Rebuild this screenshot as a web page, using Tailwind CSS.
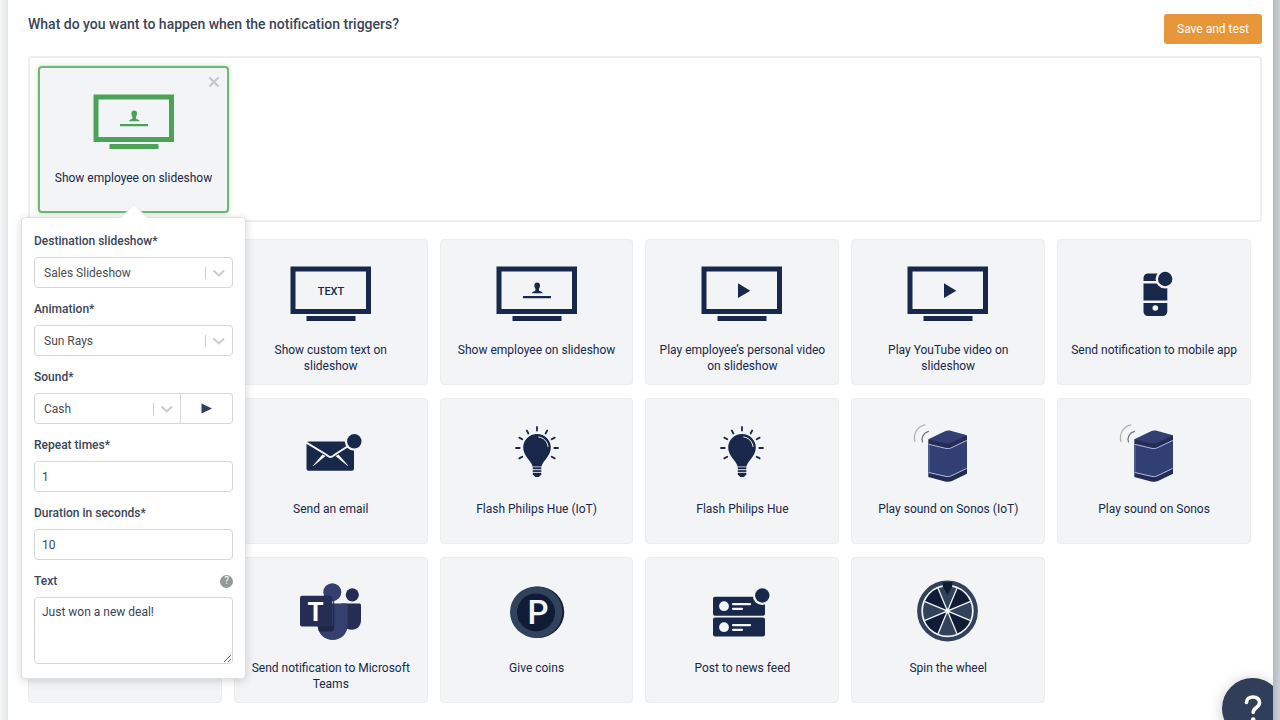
<!DOCTYPE html>
<html lang="en">
<head>
<meta charset="utf-8">
<meta name="viewport" content="width=device-width, initial-scale=1">
<title>Notification actions</title>
<script src="https://cdn.jsdelivr.net/npm/@tailwindcss/browser@4"></script>
</head>
<body class="flex h-screen overflow-hidden bg-white font-['Roboto','Liberation_Sans',sans-serif] text-[12px] leading-4 text-[#17284b]">

<!-- Shared icon shapes -->
<svg class="hidden" aria-hidden="true">
  <symbol id="tv" viewBox="0 0 84 64">
    <rect x="4" y="8" width="75.5" height="42.5" fill="none" stroke="currentColor" stroke-width="5"/>
    <rect x="17.5" y="55" width="49" height="5" fill="currentColor"/>
  </symbol>
  <symbol id="person" viewBox="0 0 84 64">
    <path fill="currentColor" d="M42.2 21.5c1.900 0 2.800 1.300 2.800 3 0 1.500-.3 2.300-1 3v1.900c.3.900 3.500.8 3.600 2.800H37c.1-2 3.100-1.900 3.400-2.800v-1.900c-.7-.7-1-1.500-1-3 0-1.700.9-3 2.800-3zM28 35h28v2.300H28z"/>
  </symbol>
  <symbol id="play" viewBox="0 0 84 64"><path fill="currentColor" d="M38 22.300v14.700l12.300-7.300z"/></symbol>
  <symbol id="bulb" viewBox="0 0 84 64">
    <path fill="currentColor" d="M42 14c7.700 0 13.800 6 13.800 13.600 0 4.400-1.900 7.400-4.300 10.600-2.400 3.200-4.600 5.400-5 8.300h-9c-.4-2.900-2.600-5.100-5-8.300-2.400-3.200-4.300-6.200-4.300-10.600C28.200 20 34.300 14 42 14z"/>
    <path fill="currentColor" d="M37.800 47.200h8.500v7.300l-2.500 2.400h-3.500l-2.500-2.400z"/>
    <path stroke="#f2f4f6" stroke-width=".9" fill="none" d="M37 49.700h10M37 52.400h10"/>
    <path stroke="#f2f4f6" stroke-width="1" fill="none" stroke-linecap="round" d="M43.700 17c5 .5 8.700 4.500 9.300 9.500"/>
    <path stroke="currentColor" stroke-width="1.800" stroke-linecap="round" d="M42 7v3.500M31.800 10.500l1.600 3M52.200 10.500l-1.600 3M24.300 17.600l3 1.700M59.700 17.600l-3 1.700M21 28h3.700M59.300 28H63M24.300 38.400l3-1.700M59.700 38.400l-3-1.700"/>
  </symbol>
  <symbol id="speaker" viewBox="0 0 84 64">
    <path fill="#232c55" d="M22.300 19.300L61 15.300v38.400L46 61c-2.500 1-4 1-7 .400L22.300 57z"/>
    <path fill="#323f73" stroke="#b4bce4" stroke-width="1" d="M22.800 24.300L39 28.200c3 .6 4.500.5 7-.7l14.500-7v28L46 55.500c-2.500 1.200-4 1.300-7 .7L22.800 52.500z"/>
    <path fill="#323f73" stroke="none" d="M22.300 24.800h1v27.400h-1zM60 21.300h1v27h-1z"/>
    <path fill="#323f73" d="M22.300 19.300L38.500 11.500c2.500-1.100 4.500-1.100 7-.5L61 15.300 46 22.500c-2.500 1.200-4.500 1.300-7 .7z"/>
    <path fill="none" stroke="#a9adb5" stroke-width="1.200" stroke-linecap="round" d="M8.900 21.500C7 14 11 6.500 18.800 4.800"/>
    <path fill="none" stroke="#70757f" stroke-width="1.200" stroke-linecap="round" d="M16.500 22c-1.500-4.500.8-9 6-10.600"/>
  </symbol>
</svg>

<div class="w-2 shrink-0 bg-linear-to-r from-[#f5f6f7] to-[#e3e5e8]"></div>

<main class="relative min-w-0 flex-1 overflow-hidden bg-white pr-[11px] pl-5">
  <header class="flex items-start justify-between pt-[14px]">
    <h1 class="text-[14px] leading-5 font-medium text-[#3b4559]">What do you want to happen when the notification triggers?</h1>
    <button class="h-[30px] rounded-[3px] bg-[#e8963a] px-[13px] text-white">Save and test</button>
  </header>

  <section class="mt-3 rounded-[4px] border-2 border-[#eeeeee] p-2 pb-[7px]" aria-label="Selected actions">
    <div class="relative h-[147px] w-[191px] rounded-[4px] border-2 border-[#6fb878] bg-[#f2f4f6] shadow-[0_0_4px_rgba(75,163,90,0.4)]">
      <button class="absolute top-2 right-[7px]" aria-label="Remove action">
        <svg class="size-3" viewBox="0 0 12 12"><path d="M1.500 1.500l9 9M10.500 1.500l-9 9" stroke="#c8c9cb" stroke-width="2.400"/></svg>
      </button>
      <div class="flex flex-col items-center pt-[21px] text-center">
        <svg class="h-16 w-[84px] text-[#4ba35a]" viewBox="0 0 84 64"><use href="#tv"/><use href="#person"/></svg>
        <p class="mt-[17px]">Show employee on slideshow</p>
      </div>

      <!-- Settings popover anchored to the selected action -->
      <form class="absolute top-[149px] left-[-19px] z-10 w-[225px] rounded-[4px] border border-[#dfe1e3] bg-white px-3 pt-[15px] pb-[14px] shadow-[0_2px_10px_rgba(0,0,0,0.16)]">
        <svg class="absolute top-[-14px] left-[98px] h-[15px] w-7" viewBox="0 0 28 15"><path d="M0 15L13 1.200q1-1 2 0L28 15z" fill="#fff"/><path d="M.5 14L13 1.200q1-1 2 0L27.500 14" fill="none" stroke="#e3e5e7" stroke-width=".8"/></svg>
        <div class="flex flex-col gap-[13px] text-[#3b4559]">
          <div class="flex flex-col gap-2">
            <label for="dest" class="font-medium">Destination slideshow*</label>
            <div class="relative">
              <select id="dest" class="block h-[31px] w-full appearance-none rounded-[4px] border border-[#d3d7d9] bg-white px-[9px] text-[#4b4d51]"><option>Sales Slideshow</option></select>
              <svg class="pointer-events-none absolute top-2 right-2 h-4 w-5" viewBox="0 0 20 16"><path d="M.5 2v12" stroke="#cccccc"/><path d="M8.500 5.500l5.300 5 5.300-5" fill="none" stroke="#cccccc" stroke-width="2"/></svg>
            </div>
          </div>
          <div class="flex flex-col gap-2">
            <label for="anim" class="font-medium">Animation*</label>
            <div class="relative">
              <select id="anim" class="block h-[31px] w-full appearance-none rounded-[4px] border border-[#d3d7d9] bg-white px-[9px] text-[#4b4d51]"><option>Sun Rays</option></select>
              <svg class="pointer-events-none absolute top-2 right-2 h-4 w-5" viewBox="0 0 20 16"><path d="M.5 2v12" stroke="#cccccc"/><path d="M8.500 5.500l5.300 5 5.300-5" fill="none" stroke="#cccccc" stroke-width="2"/></svg>
            </div>
          </div>
          <div class="flex flex-col gap-2">
            <label for="sound" class="font-medium">Sound*</label>
            <div class="flex">
              <div class="relative flex-1">
                <select id="sound" class="block h-[31px] w-full appearance-none rounded-l-[4px] border border-[#d3d7d9] bg-white px-[9px] text-[#4b4d51]"><option>Cash</option></select>
                <svg class="pointer-events-none absolute top-2 right-2 h-4 w-5" viewBox="0 0 20 16"><path d="M.5 2v12" stroke="#cccccc"/><path d="M8.500 5.500l5.300 5 5.300-5" fill="none" stroke="#cccccc" stroke-width="2"/></svg>
              </div>
              <button type="button" class="flex h-[31px] w-[52px] items-center justify-center rounded-r-[4px] border border-l-0 border-[#d3d7d9]" aria-label="Play sound">
                <svg class="h-[11px] w-[11px]" viewBox="0 0 11 11"><path d="M.5.500v10l10.500-5z" fill="#2f3e5a"/></svg>
              </button>
            </div>
          </div>
          <div class="flex flex-col gap-2">
            <label for="repeat" class="font-medium">Repeat times*</label>
            <input id="repeat" type="text" value="1" class="h-[31px] w-full rounded-[4px] border border-[#d3d7d9] px-[7px]">
          </div>
          <div class="flex flex-col gap-2">
            <label for="duration" class="font-medium">Duration in seconds*</label>
            <input id="duration" type="text" value="10" class="h-[31px] w-full rounded-[4px] border border-[#d3d7d9] px-[7px]">
          </div>
          <div class="flex flex-col gap-2">
            <div class="flex items-center justify-between">
              <label for="text" class="font-medium">Text</label>
              <span class="flex size-[13px] items-center justify-center rounded-full bg-[#949897] text-[10px] leading-none text-white">?</span>
            </div>
            <textarea id="text" class="block h-[67px] w-full resize-y rounded-[4px] border border-[#d3d7d9] px-[7px] py-[6px]">Just won a new deal!</textarea>
          </div>
        </div>
      </form>
    </div>
  </section>

  <section class="mt-[17px] mr-[11px] grid grid-cols-6 gap-x-3 gap-y-[13px]" aria-label="Available actions">
    <div class="h-[146px] rounded-[4px] border border-[#ebedee] bg-[#f2f4f6]"></div>
    <button class="flex h-[146px] flex-col items-center rounded-[4px] border border-[#ebedee] bg-[#f2f4f6] px-2 pt-[21px]">
      <svg class="h-16 w-[84px] shrink-0" viewBox="0 0 84 64"><use href="#tv"/><text x="42" y="33.500" text-anchor="middle" font-size="11" font-weight="500" fill="currentColor">TEXT</text></svg>
      <span class="mt-[17px] max-w-[150px]">Show custom text on slideshow</span>
    </button>
    <button class="flex h-[146px] flex-col items-center rounded-[4px] border border-[#ebedee] bg-[#f2f4f6] px-2 pt-[21px]">
      <svg class="h-16 w-[84px] shrink-0" viewBox="0 0 84 64"><use href="#tv"/><use href="#person"/></svg>
      <span class="mt-[17px]">Show employee on slideshow</span>
    </button>
    <button class="flex h-[146px] flex-col items-center rounded-[4px] border border-[#ebedee] bg-[#f2f4f6] px-2 pt-[21px]">
      <svg class="h-16 w-[84px] shrink-0" viewBox="0 0 84 64"><use href="#tv"/><use href="#play"/></svg>
      <span class="mt-[17px]">Play employee’s personal video on slideshow</span>
    </button>
    <button class="flex h-[146px] flex-col items-center rounded-[4px] border border-[#ebedee] bg-[#f2f4f6] px-2 pt-[21px]">
      <svg class="h-16 w-[84px] shrink-0" viewBox="0 0 84 64"><use href="#tv"/><use href="#play"/></svg>
      <span class="mt-[17px] max-w-[150px]">Play YouTube video on slideshow</span>
    </button>
    <button class="flex h-[146px] flex-col items-center rounded-[4px] border border-[#ebedee] bg-[#f2f4f6] px-2 pt-[21px]">
      <svg class="h-16 w-[84px] shrink-0" viewBox="0 0 84 64">
        <rect x="31.500" y="12.500" width="23.800" height="42.500" rx="4.500" fill="currentColor"/>
        <path d="M31 21.200h25M31 40.700h25" stroke="#f2f4f6" stroke-width="2.500"/>
        <circle cx="43.300" cy="47" r="2.800" fill="#f2f4f6"/>
        <circle cx="53.200" cy="18" r="9.600" fill="#f2f4f6"/><circle cx="53.200" cy="18" r="7.200" fill="currentColor"/>
      </svg>
      <span class="mt-[17px]">Send notification to mobile app</span>
    </button>

    <div class="h-[146px] rounded-[4px] border border-[#ebedee] bg-[#f2f4f6]"></div>
    <button class="flex h-[146px] flex-col items-center rounded-[4px] border border-[#ebedee] bg-[#f2f4f6] px-2 pt-[21px]">
      <svg class="h-16 w-[84px] shrink-0" viewBox="0 0 84 64">
        <rect x="17.500" y="21.500" width="47.500" height="29.300" rx="2" fill="currentColor"/>
        <path d="M17 22.300L37 34.500c2 1.500 2.500 2.500 4.500 2.500s2.500-1 4.500-2.500L60 25.500" fill="none" stroke="#f2f4f6" stroke-width="2"/>
        <path d="M33.500 34.500L36.500 36 24.500 46l-.4-.5zM49.500 34.500L46.500 36 58.700 46l.4-.5z" fill="#f2f4f6"/>
        <circle cx="65.300" cy="21.300" r="9.500" fill="#f2f4f6"/><circle cx="65.300" cy="21.300" r="7.200" fill="currentColor"/>
      </svg>
      <span class="mt-[17px]">Send an email</span>
    </button>
    <button class="flex h-[146px] flex-col items-center rounded-[4px] border border-[#ebedee] bg-[#f2f4f6] px-2 pt-[21px]">
      <svg class="h-16 w-[84px] shrink-0" viewBox="0 0 84 64"><use href="#bulb"/></svg>
      <span class="mt-[17px]">Flash Philips Hue (IoT)</span>
    </button>
    <button class="flex h-[146px] flex-col items-center rounded-[4px] border border-[#ebedee] bg-[#f2f4f6] px-2 pt-[21px]">
      <svg class="h-16 w-[84px] shrink-0" viewBox="0 0 84 64"><use href="#bulb"/></svg>
      <span class="mt-[17px]">Flash Philips Hue</span>
    </button>
    <button class="flex h-[146px] flex-col items-center rounded-[4px] border border-[#ebedee] bg-[#f2f4f6] px-2 pt-[21px]">
      <svg class="h-16 w-[84px] shrink-0" viewBox="0 0 84 64"><use href="#speaker"/></svg>
      <span class="mt-[17px]">Play sound on Sonos (IoT)</span>
    </button>
    <button class="flex h-[146px] flex-col items-center rounded-[4px] border border-[#ebedee] bg-[#f2f4f6] px-2 pt-[21px]">
      <svg class="h-16 w-[84px] shrink-0" viewBox="0 0 84 64"><use href="#speaker"/></svg>
      <span class="mt-[17px]">Play sound on Sonos</span>
    </button>

    <div class="h-[146px] rounded-[4px] border border-[#ebedee] bg-[#f2f4f6]"></div>
    <button class="flex h-[146px] flex-col items-center rounded-[4px] border border-[#ebedee] bg-[#f2f4f6] px-2 pt-[21px]">
      <svg class="h-16 w-[84px] shrink-0" viewBox="0 0 84 64">
        <circle cx="63.300" cy="15.800" r="6.600" fill="#262d52"/>
        <path d="M52 24.500h18.500q1.500 0 1.500 1.500v15c0 6-4 9.800-9 9.800-4 0-7-1.500-8.500-4z" fill="#262d52"/>
        <circle cx="43.300" cy="13.200" r="9" fill="#35406f"/>
        <path d="M28.700 24.500h28.500q1.500 0 1.500 1.500v20c0 8.500-6.500 15-15 15s-15-6.500-15-15z" fill="#35406f"/>
        <path d="M28.700 47h13.500q2 0 2-2V20l1 1v28q0 3.500-3 3.500H30z" fill="#1f2747"/>
        <rect x="11" y="16.800" width="32.300" height="30.700" rx="2" fill="#262d52"/>
        <text x="26.500" y="42" text-anchor="middle" font-size="26" font-weight="700" fill="#fff">T</text>
      </svg>
      <span class="mt-[17px]">Send notification to Microsoft Teams</span>
    </button>
    <button class="flex h-[146px] flex-col items-center rounded-[4px] border border-[#ebedee] bg-[#f2f4f6] px-2 pt-[21px]">
      <svg class="h-16 w-[84px] shrink-0" viewBox="0 0 84 64">
        <ellipse cx="43" cy="33.200" rx="26.200" ry="25.700" fill="#101c36"/>
        <ellipse cx="41.200" cy="33.200" rx="26.200" ry="25.700" fill="#33425c"/>
        <circle cx="41" cy="33.400" r="19" fill="#101c36"/>
        <text x="43" y="45" text-anchor="middle" font-size="33" font-weight="500" fill="#f2f4f6">P</text>
      </svg>
      <span class="mt-[17px]">Give coins</span>
    </button>
    <button class="flex h-[146px] flex-col items-center rounded-[4px] border border-[#ebedee] bg-[#f2f4f6] px-2 pt-[21px]">
      <svg class="h-16 w-[84px] shrink-0" viewBox="0 0 84 64">
        <rect x="13" y="17.800" width="52" height="19" rx="2" fill="currentColor"/>
        <rect x="13" y="38.500" width="52" height="19" rx="2" fill="currentColor"/>
        <g fill="#f2f4f6"><circle cx="24" cy="27.200" r="4.900"/><circle cx="24" cy="48.200" r="4.900"/></g>
        <path d="M33 25.200h17M33 29.800h9M33 46.200h17M33 50.800h9" stroke="#f2f4f6" stroke-width="2.200" stroke-linecap="round"/>
        <circle cx="62.300" cy="16.500" r="9.500" fill="#f2f4f6"/><circle cx="62.300" cy="16.500" r="7.200" fill="currentColor"/>
      </svg>
      <span class="mt-[17px]">Post to news feed</span>
    </button>
    <button class="flex h-[146px] flex-col items-center rounded-[4px] border border-[#ebedee] bg-[#f2f4f6] px-2 pt-[21px]">
      <svg class="h-16 w-[84px] shrink-0" viewBox="0 0 84 64">
        <g transform="translate(41.500 32)">
          <circle r="28.300" fill="#f2f4f6" stroke="#33425c" stroke-width="4.200"/>
          <circle r="24.500" fill="#33425c"/>
          <g fill="#101c36">
            <path d="M0 0L9.400-22.600A24.500 24.500 0 0 1 22.600-9.400z"/>
            <path d="M0 0L22.600 9.400A24.500 24.500 0 0 1 9.400 22.600z"/>
            <path d="M0 0L-9.400 22.600A24.500 24.500 0 0 1-22.600 9.400z"/>
            <path d="M0 0L-22.600-9.400A24.500 24.500 0 0 1-9.400-22.600z"/>
          </g>
          <path d="M-9.600-23.100L9.600 23.100M9.600-23.100L-9.600 23.100M-23.100-9.600L23.100 9.600M-23.100 9.600L23.100-9.600" stroke="#f2f4f6" stroke-width="1.300"/>
          <circle r="2.400" fill="#f2f4f6"/>
          <path d="M-4.700-29h9.400v4.500L0-16l-4.700-8.500z" fill="#101c36"/>
        </g>
      </svg>
      <span class="mt-[17px]">Spin the wheel</span>
    </button>
  </section>

  <button class="absolute right-[-10px] bottom-[-19px] flex size-[61px] items-center justify-center rounded-full bg-[#303e59] shadow-[0_2px_14px_rgba(0,0,0,0.22)]" aria-label="Help">
    <svg class="h-[30px] w-5" viewBox="0 0 20 30"><path d="M3.500 8.500C3.500 5 6.300 3 10 3s6.600 2.200 6.600 5.500c0 2.600-1.600 3.900-3.400 5.200-2 1.400-3 2.300-3 4.800" fill="none" stroke="#fff" stroke-width="3.600" stroke-linecap="round"/><circle cx="10.200" cy="25.500" r="2.300" fill="#fff"/></svg>
  </button>
</main>

<div class="w-[7px] shrink-0 bg-linear-to-r from-[#b2b9c6] to-[#cdd0d5]"></div>
</body>
</html>
